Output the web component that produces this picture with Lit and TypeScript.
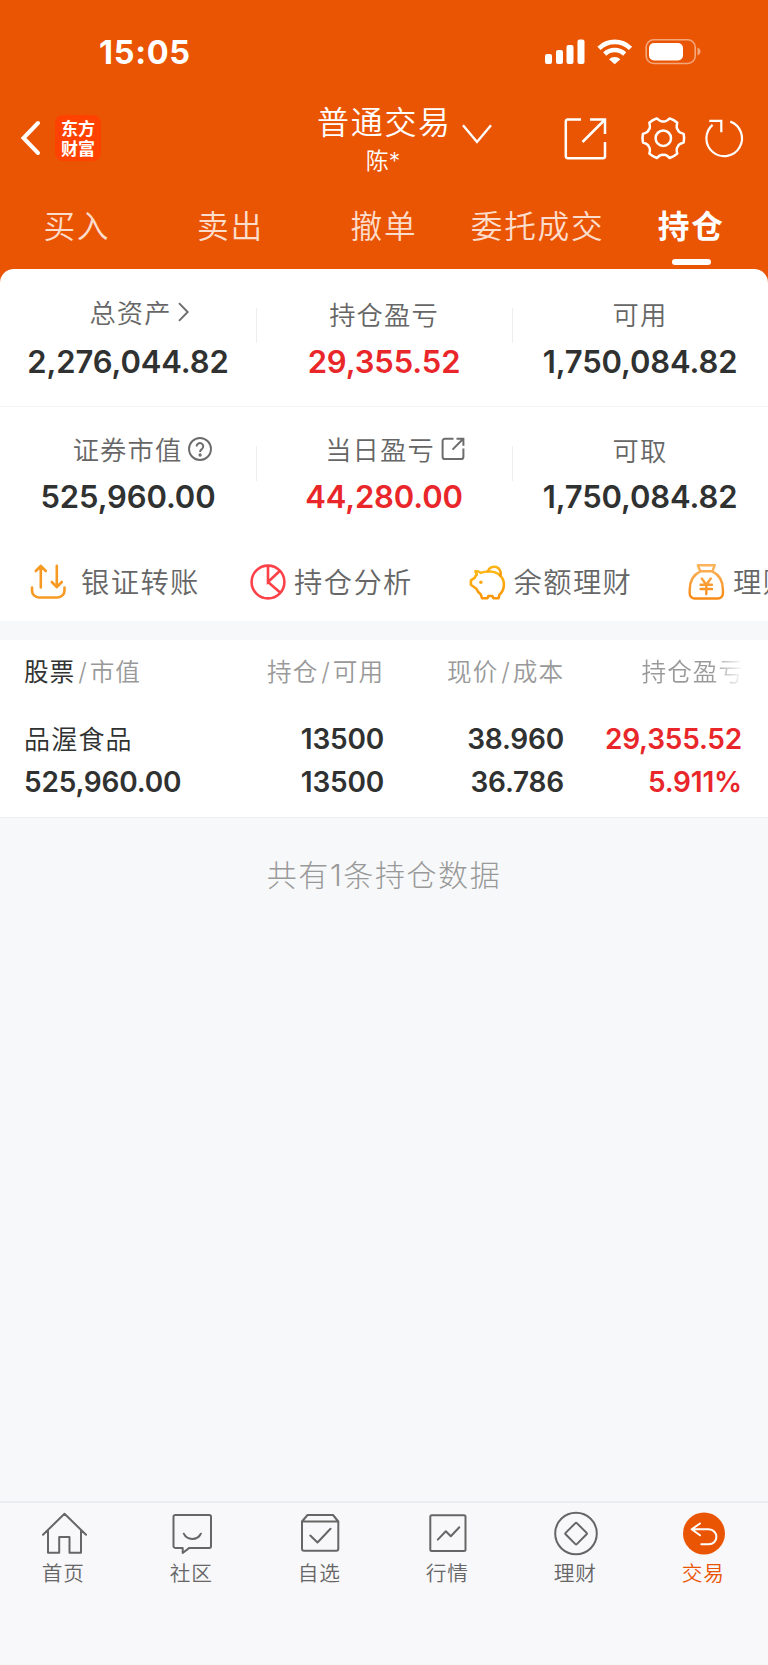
import { LitElement, html, css, svg } from "lit";
import { customElement } from "lit/decorators.js";
import { classMap } from "lit/directives/class-map.js";

const tabs = ["买入", "卖出", "撤单", "委托成交", "持仓"];

// Six-lobed gear outline: a short flat tip per lobe, joined by concave curves.
const gearPath = (cx: number, cy: number) => {
  const at = (r: number, deg: number) => {
    const a = (deg * Math.PI) / 180;
    return `${(cx + r * Math.cos(a)).toFixed(2)} ${(cy + r * Math.sin(a)).toFixed(2)}`;
  };
  let d = `M${at(20.8, -12)}`;
  for (let k = 0; k < 6; k++) {
    const t = k * 60;
    d += `Q${at(21.3, t)} ${at(20.8, t + 12)}C${at(17.5, t + 18)} ${at(16.2, t + 23)} ${at(16.8, t + 30)}`;
    d += `C${at(16.2, t + 37)} ${at(17.5, t + 42)} ${at(20.8, t + 48)}`;
  }
  return d + "Z";
};

const chevron = html`<svg width="11" height="20" viewBox="0 0 11 20"><path d="M1 1.200 9.700 10 1 18.800" fill="none" stroke="#6c6c6c" stroke-width="1.900"/></svg>`;
const help = html`<svg width="24" height="24" viewBox="0 0 24 24" fill="none" stroke="#6c6c6c" stroke-width="1.900"><circle cx="12" cy="12" r="11"/><path d="M8.600 9.400a3.300 3.300 0 1 1 5.200 2.700c-1.200.8-1.700 1.400-1.700 2.800" stroke-width="2"/><circle cx="12.100" cy="18" r=".7" fill="#6c6c6c"/></svg>`;
const share = html`<svg width="24" height="24" viewBox="0 0 24 24" fill="none" stroke="#6c6c6c" stroke-width="2"><path d="M12.500 1.700H4a2.400 2.400 0 0 0-2.400 2.400V19.700A2.400 2.400 0 0 0 4 22.100H20a2.400 2.400 0 0 0 2.400-2.400V11.500M11.500 12.600 22 2M15.500 1.800H22.400V8.700"/></svg>`;

const summary = [
  [
    { label: "总资产", icon: chevron, value: "2,276,044.82", up: false },
    { label: "持仓盈亏", icon: null, value: "29,355.52", up: true },
    { label: "可用", icon: null, value: "1,750,084.82", up: false },
  ],
  [
    { label: "证券市值", icon: help, value: "525,960.00", up: false },
    { label: "当日盈亏", icon: share, value: "44,280.00", up: true },
    { label: "可取", icon: null, value: "1,750,084.82", up: false },
  ],
];

const shortcuts = [
  {
    label: "银证转账",
    icon: svg`<g fill="none" stroke="#f79a23" stroke-width="2.600" stroke-linecap="round" stroke-linejoin="round"><path d="M10.800 23.500V2M5.800 7l5-5.200 5 5.200M26.800 1.800v21.500M21.800 18l5 5.200 5-5.200M2 23.500v3a7 7 0 0 0 7 7h18.500a7 7 0 0 0 7-7v-3"/></g>`,
  },
  {
    label: "持仓分析",
    icon: svg`<g fill="none" stroke="#fc4148" stroke-width="2.600"><circle cx="18" cy="18" r="16.400"/><path d="M18 1.500V18L30 6.800M18 18l12.700 11"/></g>`,
  },
  {
    label: "余额理财",
    icon: svg`<defs><linearGradient id="pig" x1="0" y1="0" x2="0" y2="1"><stop offset="0" stop-color="#fdb714"/><stop offset="1" stop-color="#fb9609"/></linearGradient></defs><g transform="translate(-.6)"><g fill="none" stroke="url(#pig)" stroke-width="2.600" stroke-linejoin="round" stroke-linecap="round"><path d="M6 7.300c2.300-.3 3.800.2 5.300 1.600C14 7.800 17.500 7.300 21 7.500 28.500 8 34.500 13 34.500 20.500c0 4.500-1.900 8-4.500 10.200l-.8 3.500H24L23 32H19L18 34.200H12.600L11.300 30.300C9 28.700 7.800 26.800 7 24.700L1.500 20.700V16.300L5.200 13.800C5.600 12.500 6.300 11.600 7.400 10.700Z"/><path d="M18.500 7.200a6.400 6.400 0 1 1 12.500 4.300"/></g><circle cx="11.500" cy="18.300" r="1.700" fill="#fba70f"/></g>`,
  },
  {
    label: "理财",
    icon: svg`<defs><linearGradient id="bag" x1="0" y1="0" x2="0" y2="1"><stop offset="0" stop-color="#fbb45c"/><stop offset="1" stop-color="#f98a16"/></linearGradient></defs><g transform="translate(-.7)" fill="none" stroke="url(#bag)" stroke-width="2.400" stroke-linejoin="round" stroke-linecap="round"><path d="M9.500 1.300H26.500L24 7.300H12ZM12 7.300C5.500 10.500 1.400 17 1.400 25.500V29.500A5 5 0 0 0 6.500 34.500h23A5 5 0 0 0 34.600 29.500V25.500C34.600 17 30.500 10.500 24 7.300M13.500 14.500l4.500 6.200 4.500-6.200M12.300 20.700H23.700M12.300 25H23.700M18 20.700V30"/></g>`,
  },
];

const nav = [
  { label: "首页", icon: svg`<path d="M2 22.700 23.500 1.800 45 22.700M7 18.500V40.800H18.200V25H28.500V40.800H40V18.500"/>` },
  { label: "社区", icon: svg`<path d="M6.200 3H40.300A1.700 1.700 0 0 1 42 4.700V34.200A1.700 1.700 0 0 1 40.300 35.900H20.300L13.700 41V35.900H6.200A1.700 1.700 0 0 1 4.500 34.200V4.700A1.700 1.700 0 0 1 6.200 3ZM14.800 21.700C18 28.600 28.500 28.600 31.800 21.700"/>` },
  { label: "自选", icon: svg`<path d="M5 9.500V36.800A2 2 0 0 0 7 38.800H39.300A2 2 0 0 0 41.300 36.800V9.500M5 9.500 10.500 3H36L41.300 9.500ZM13.300 23.500 20.500 30.500 33.500 16.800"/>` },
  { label: "行情", icon: svg`<rect x="5.300" y="3.300" width="35.200" height="35.600" rx="1.500"/><path d="M12.800 27.600 20.800 19.300 25.800 24.300 34.300 15.300"/>` },
  { label: "理财", icon: svg`<circle cx="23" cy="21.500" r="20.800"/><path d="M22.400 11.100 12.600 20.900a1 1 0 0 0 0 1.400L22.400 32.100a1 1 0 0 0 1.400 0L33.600 22.300a1 1 0 0 0 0-1.400L23.800 11.100a1 1 0 0 0-1.400 0Z"/>` },
  { label: "交易", icon: svg`<circle cx="23" cy="21.500" r="21" fill="#ea5504" stroke="none"/><path d="M19 11.500 10.700 17.300 19 23.300M10.700 17.300H27.500C38 17.600 38 32.200 27.500 32.300H20.300" stroke="#fff"/>` },
];

@customElement("app-root")
export class AppRoot extends LitElement {
  static styles = css`
    :host { display: flex; flex-direction: column; width: 768px; height: 1665px; overflow: hidden; background: #f7f8fa; color: #303131; font-family: Inter, "Noto Sans CJK SC", sans-serif; }
    * { box-sizing: border-box; }
    svg { display: block; flex: none; overflow: visible; }
    .top { background: #ea5504; color: #fff; height: 269px; display: flex; flex-direction: column; }
    .status { height: 104px; padding: 39px 68px 0 99px; display: flex; justify-content: space-between; align-items: flex-start; }
    .clock { font-size: 32.500px; font-weight: 700; line-height: 28px; letter-spacing: .7px; }
    .navrow { height: 84px; display: grid; grid-template-columns: 317px 1fr auto; padding: 0 21px 0 0; }
    .left { display: flex; gap: 15px; align-items: flex-start; padding: 11px 0 0 20px; }
    .back { margin-top: 6px; }
    .logo { width: 46px; height: 46px; border-radius: 8px; background: #ff4200; font: 700 17px/19.500px "Noto Sans CJK SC", sans-serif; padding-top: 3px; text-align: center; display: flex; flex-direction: column; }
    .title { display: flex; gap: 10px; }
    .names { display: flex; flex-direction: column; align-items: center; }
    .name { font-size: 32px; line-height: 38px; letter-spacing: 1.700px; font-weight: 350; }
    .acct { font-size: 23px; line-height: 38px; font-weight: 350; margin-right: 3px; }
    .down { margin-top: 20px; }
    .right { padding-top: 12px; }
    .tabs { flex: 1; display: grid; grid-template-columns: repeat(5, 1fr); }
    .tab { text-align: center; font-size: 31.700px; line-height: 37px; padding-top: 20px; letter-spacing: 1.700px; color: #fcdccb; font-weight: 350; display: flex; flex-direction: column; align-items: center; }
    .tab.on { color: #fff; font-weight: 600; }
    .tab.on::after { content: ""; width: 39px; height: 6px; border-radius: 3px; background: #fff; margin-top: 14px; }
    .card { background: #ea5504; }
    .panel { background: #fff; border-radius: 14px 14px 0 0; height: 352px; }
    .sum { display: grid; grid-template-columns: repeat(3, 1fr); height: 138px; border-bottom: 1.500px solid #f4f4f4; }
    .sum.second { border: 0; height: 126px; }
    .cell { display: flex; flex-direction: column; align-items: center; background: linear-gradient(#eee, #eee) left 39px / 1px 35px no-repeat; }
    .cell:first-child { background: none; }
    .label { display: flex; align-items: center; height: 36px; margin: 26px 0 12px; font-size: 26.300px; letter-spacing: 1.100px; color: #666; font-weight: 350; gap: 6px; }
    .label.iconed { margin: 24px 0 14px; padding-left: 22px; }
    .label svg { margin-top: 2px; }
    .second .label { margin: 24px 0 11px; }
    .second .label.iconed { margin: 23px 0 12px; }
    .second .cell:first-child .label { padding-left: 29px; }
    .value { font-size: 31px; font-weight: 600; line-height: 37px; letter-spacing: -.12px; }
    .up { color: #e9262a; }
    .shortcuts { display: flex; height: 88px; padding: 31px 0 0 30px; overflow: hidden; }
    .shortcut { display: flex; flex: none; width: 219.500px; gap: 8px; font-size: 28.300px; letter-spacing: 1.400px; line-height: 38px; color: #666; font-weight: 350; }
    .shortcut:first-child { width: 220px; gap: 15px; }
    .table { margin-top: 19px; background: #fff; height: 178px; border-bottom: 1px solid #eee; padding: 0 26px 0 24px; }
    .row { display: grid; grid-template-columns: 200px 160px 180px 178px; text-align: right; font-size: 28px; line-height: 36px; font-weight: 600; height: 43px; letter-spacing: -.2px; }
    .row > :first-child { text-align: left; }
    .head { font-size: 24.600px; font-weight: 350; color: #999; letter-spacing: 1px; height: 81px; padding-top: 14px; }
    .head b { font-weight: 400; color: #333; }
    .head i { font-style: normal; margin: 0 2px 0 3px; }
    .fade { background: linear-gradient(90deg, #999 68%, #fff 100%); background-clip: text; -webkit-background-clip: text; color: transparent; margin-right: -2px; }
    .stock { font-size: 26px; letter-spacing: 1.200px; font-weight: 350; line-height: 38px; }
    .count { margin-top: 38px; text-align: center; font-size: 30px; letter-spacing: 1.600px; line-height: 38px; color: #999; font-weight: 300; flex: 1; }
    .bar { height: 164px; border-top: 2px solid #e8ecee; display: grid; grid-template-columns: repeat(6, 1fr); background: #f8f8fb; }
    .item { display: flex; flex-direction: column; align-items: center; padding-top: 9px; font-size: 20.700px; letter-spacing: .8px; line-height: 30px; color: #666; font-weight: 350; }
    .item svg { margin: 0 0 4px; }
    .item span { margin-right: 1.500px; }
    .item.on { color: #ea5504; }
  `;

  render() {
    const slash = html`<i>/</i>`;
    return html`
      <header class="top">
        <div class="status">
          <span class="clock">15:05</span>
          <svg width="156" height="26" viewBox="544 39 156 26" fill="#fff">
            <rect x="545" y="54" width="7" height="10" rx="2"/><rect x="556" y="50" width="7" height="14" rx="2"/><rect x="566.500" y="45" width="7" height="19" rx="2"/><rect x="577.500" y="39.500" width="7" height="24.500" rx="2"/>
            <g fill="none" stroke="#fff" stroke-width="4.600"><path d="M599 48.300a22.500 22.500 0 0 1 31.500 0"/><path d="M604.700 54a14.500 14.500 0 0 1 20 0"/></g><path d="M609 59.300a8 8 0 0 1 11.400 0l-5.700 5Z"/>
            <rect x="646.200" y="39.800" width="49" height="23.700" rx="7.500" fill="none" stroke="#f5a77c" stroke-width="1.600"/><rect x="649" y="43" width="34" height="17.500" rx="5"/><path d="M697.500 47.500c4 1.500 4 6.500 0 8Z" fill="#f5a77c"/>
          </svg>
        </div>
        <div class="navrow">
          <div class="left">
            <svg class="back" width="20" height="34" viewBox="0 0 20 34"><path d="M18 2 3.500 17 18 32" fill="none" stroke="#fff" stroke-width="4" stroke-linecap="round" stroke-linejoin="miter"/></svg>
            <div class="logo"><span>东方</span><span>财富</span></div>
          </div>
          <div class="title">
            <div class="names"><span class="name">普通交易</span><span class="acct">陈*</span></div>
            <svg class="down" width="30" height="20" viewBox="0 0 30 20"><path d="M1 1.200 15 18 29 1.200" fill="none" stroke="#fff" stroke-width="2.400"/></svg>
          </div>
          <div class="right">
            <svg width="182" height="46" viewBox="565 116 182 46" fill="none" stroke="#fff" stroke-width="2.500">
              <path d="M581 119.500H567.500A2 2 0 0 0 565.800 121.200V156.500A2 2 0 0 0 567.500 158.200H603A2 2 0 0 0 605 156.500V142M582.500 142 605 119.500M590 119.500H605V134"/>
              <circle cx="663.300" cy="138.200" r="7.700"/>
              <path d=${gearPath(663.3, 138.2)} stroke-linejoin="round"/>
              <path d="M729.500 121.300A17.800 17.800 0 1 1 711.800 124.500M708.500 120.500H720.500V132" transform="translate(.8 .3)" stroke-width="2.200"/>
            </svg>
          </div>
        </div>
        <nav class="tabs">${tabs.map((t, i) => html`<span class=${classMap({ tab: true, on: i === 4 })}>${t}</span>`)}</nav>
      </header>
      <div class="card"><section class="panel">
        ${summary.map((r, i) => html`<div class=${classMap({ sum: true, second: i === 1 })}>${r.map((c) => html`<div class="cell"><div class=${classMap({ label: true, iconed: !!c.icon })}><span>${c.label}</span>${c.icon}</div><div class=${classMap({ value: true, up: c.up })}>${c.value}</div></div>`)}</div>`)}
        <div class="shortcuts">${shortcuts.map((s) => html`<div class="shortcut"><svg width="36" height="36" viewBox="0 0 36 36">${s.icon}</svg><span>${s.label}</span></div>`)}</div>
      </section></div>
      <section class="table">
        <div class="row head"><span><b>股票</b>${slash}市值</span><span>持仓${slash}可用</span><span>现价${slash}成本</span><span><span class="fade">持仓盈亏</span></span></div>
        <div class="row"><span class="stock">品渥食品</span><span>13500</span><span>38.960</span><span class="up">29,355.52</span></div>
        <div class="row"><span>525,960.00</span><span>13500</span><span>36.786</span><span class="up">5.911%</span></div>
      </section>
      <div class="count">共有1条持仓数据</div>
      <nav class="bar">${nav.map((n, i) => html`<div class=${classMap({ item: true, on: i === 5 })}><svg width="46" height="43" viewBox="0 0 46 43" fill="none" stroke=${i === 5 ? "#fff" : "#666"} stroke-width="2" stroke-linecap="round" stroke-linejoin="round">${n.icon}</svg><span>${n.label}</span></div>`)}</nav>
    `;
  }
}
